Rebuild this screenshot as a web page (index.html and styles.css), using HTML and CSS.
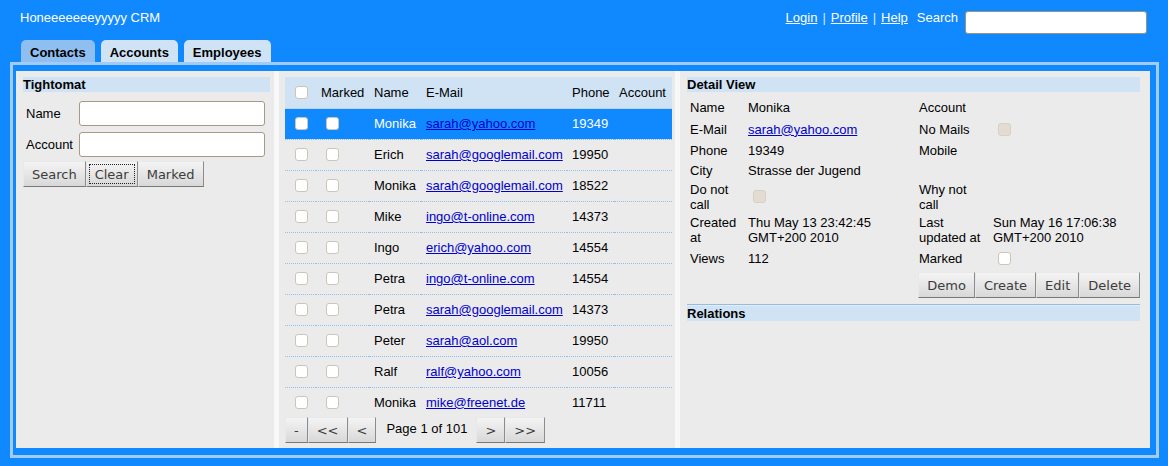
FILE: index.html
```html
<!DOCTYPE html>
<html>
<head>
<meta charset="utf-8">
<title>Honeeeeeeeyyyyy CRM</title>
<link rel="stylesheet" href="styles.css">
</head>
<body>
<div class="topbar">
  <div class="brand">Honeeeeeeeyyyyy CRM</div>
  <div class="toplinks">
    <a href="#">Login</a><span class="sep">|</span><a href="#">Profile</a><span class="sep">|</span><a href="#">Help</a>
    <span class="search-label">Search</span>
    <input class="search-input" type="text">
  </div>
</div>
<div class="tabs">
  <div class="tab active">Contacts</div>
  <div class="tab">Accounts</div>
  <div class="tab">Employees</div>
</div>
<div class="main">
  <div class="panes">
    <div class="pane left">
      <div class="caption">Tightomat</div>
      <div class="form">
        <label>Name</label><input type="text" class="field">
        <label>Account</label><input type="text" class="field">
      </div>
      <div class="btnbar">
        <button class="btn">Search</button><button class="btn focused">Clear</button><button class="btn">Marked</button>
      </div>
    </div>
    <div class="splitter"></div>
    <div class="pane middle">
      <table class="grid">
        <colgroup>
          <col class="c1"><col class="c2"><col class="c3"><col class="c4"><col class="c5"><col class="c6">
        </colgroup>
        <thead>
          <tr><th><input type="checkbox" class="cb"></th><th>Marked</th><th>Name</th><th>E-Mail</th><th>Phone</th><th>Account</th></tr>
        </thead>
        <tbody>
          <tr class="sel"><td><input type="checkbox" class="cb"></td><td><input type="checkbox" class="cb"></td><td>Monika</td><td><a href="#">sarah@yahoo.com</a></td><td>19349</td><td></td></tr>
          <tr><td><input type="checkbox" class="cb"></td><td><input type="checkbox" class="cb"></td><td>Erich</td><td><a href="#">sarah@googlemail.com</a></td><td>19950</td><td></td></tr>
          <tr><td><input type="checkbox" class="cb"></td><td><input type="checkbox" class="cb"></td><td>Monika</td><td><a href="#">sarah@googlemail.com</a></td><td>18522</td><td></td></tr>
          <tr><td><input type="checkbox" class="cb"></td><td><input type="checkbox" class="cb"></td><td>Mike</td><td><a href="#">ingo@t-online.com</a></td><td>14373</td><td></td></tr>
          <tr><td><input type="checkbox" class="cb"></td><td><input type="checkbox" class="cb"></td><td>Ingo</td><td><a href="#">erich@yahoo.com</a></td><td>14554</td><td></td></tr>
          <tr><td><input type="checkbox" class="cb"></td><td><input type="checkbox" class="cb"></td><td>Petra</td><td><a href="#">ingo@t-online.com</a></td><td>14554</td><td></td></tr>
          <tr><td><input type="checkbox" class="cb"></td><td><input type="checkbox" class="cb"></td><td>Petra</td><td><a href="#">sarah@googlemail.com</a></td><td>14373</td><td></td></tr>
          <tr><td><input type="checkbox" class="cb"></td><td><input type="checkbox" class="cb"></td><td>Peter</td><td><a href="#">sarah@aol.com</a></td><td>19950</td><td></td></tr>
          <tr><td><input type="checkbox" class="cb"></td><td><input type="checkbox" class="cb"></td><td>Ralf</td><td><a href="#">ralf@yahoo.com</a></td><td>10056</td><td></td></tr>
          <tr><td><input type="checkbox" class="cb"></td><td><input type="checkbox" class="cb"></td><td>Monika</td><td><a href="#">mike@freenet.de</a></td><td>11711</td><td></td></tr>
        </tbody>
      </table>
      <div class="pager">
        <button class="btn">-</button><button class="btn">&lt;&lt;</button><button class="btn">&lt;</button>
        <span class="pageinfo">Page 1 of 101</span>
        <button class="btn">&gt;</button><button class="btn">&gt;&gt;</button>
      </div>
    </div>
    <div class="splitter"></div>
    <div class="pane right">
      <div class="caption">Detail View</div>
      <div class="detail">
        <span>Name</span><span>Monika</span><span>Account</span><span></span>
        <span>E-Mail</span><span><a href="#">sarah@yahoo.com</a></span><span>No Mails</span><span><input type="checkbox" class="cb" disabled></span>
        <span>Phone</span><span>19349</span><span>Mobile</span><span></span>
        <span>City</span><span>Strasse der Jugend</span><span></span><span></span>
        <span>Do not<br>call</span><span><input type="checkbox" class="cb" disabled></span><span>Why not<br>call</span><span></span>
        <span>Created<br>at</span><span>Thu May 13 23:42:45<br>GMT+200 2010</span><span>Last<br>updated at</span><span>Sun May 16 17:06:38<br>GMT+200 2010</span>
        <span>Views</span><span>112</span><span>Marked</span><span><input type="checkbox" class="cb"></span>
      </div>
      <div class="actions">
        <button class="btn">Demo</button><button class="btn">Create</button><button class="btn">Edit</button><button class="btn">Delete</button>
      </div>
      <div class="rule"></div>
      <div class="caption">Relations</div>
    </div>
  </div>
</div>
</body>
</html>
```
FILE: styles.css
```css
* { box-sizing: border-box; }
html, body { margin: 0; padding: 0; }
body {
  width: 1168px;
  height: 466px;
  overflow: hidden;
  background: #1089ff;
  font-family: "Liberation Sans", Arial, sans-serif;
  font-size: 13px;
  line-height: 15px;
  color: #000;
}
a { color: #0000cc; }

.topbar {
  display: flex;
  justify-content: space-between;
  align-items: flex-start;
  height: 40px;
  padding: 0 21px 0 20px;
}
.brand { color: #fff; padding-top: 10px; }
.toplinks { display: flex; align-items: flex-start; color: #fff; }
.toplinks a { color: #fff; padding-top: 10px; }
.sep { padding-top: 10px; margin: 0 5px; color: #d6e8ff; }
.search-label { padding-top: 10px; margin-left: 9px; margin-right: 7px; }
.search-input {
  margin: 11px 0 0 0;
  width: 182px;
  height: 23px;
  border: 1px solid #9c9182;
  border-radius: 3px;
  background: #fff;
}

.tabs { display: flex; gap: 6px; height: 22px; padding-left: 21px; }
.tab {
  height: 22px;
  padding: 3px 9px 0 9px;
  line-height: 19px;
  font-weight: bold;
  background: #cfe3f5;
  border-radius: 5px 5px 0 0;
}
.tab.active { background: #8fbef0; }

.main {
  margin-left: 10px;
  width: 1149px;
  height: 396px;
  border: 3px solid #a2cbf5;
  padding: 6px 6px 7px 3px;
}
.panes { display: flex; height: 377px; }
.pane { background: #ebebeb; height: 100%; }
.splitter { width: 5px; background: #f8f8f8; }
.left { width: 258px; padding: 6px 4px 0 7px; }
.middle { width: 396px; padding: 6px 3px 0 6px; }
.right { width: 470px; padding: 6px 10px 0 7px; }

.caption {
  height: 15px;
  line-height: 15px;
  background: #cfe3f5;
  font-weight: bold;
}

.form {
  display: grid;
  grid-template-columns: 56px 186px;
  grid-auto-rows: 25px;
  row-gap: 6px;
  margin-top: 9px;
  align-items: center;
}
.form label { padding-left: 3px; }
.field {
  width: 186px;
  height: 25px;
  margin: 0;
  border: 1px solid #a69a86;
  border-radius: 3px;
  background: #fff;
}

.btnbar { display: flex; margin-top: 4px; }
.btn {
  height: 26px;
  padding: 0 8px;
  margin: 0;
  font-family: "DejaVu Sans", sans-serif;
  font-size: 13px;
  color: #3c3c3c;
  background: linear-gradient(#f4f4f4, #d8d8d8);
  border: 1px solid;
  border-color: #e8e8e8 #8c8c8c #777 #e8e8e8;
  border-radius: 0;
}
.btn.focused { outline: 1px dotted #222; outline-offset: -4px; }

.grid { border-collapse: collapse; table-layout: fixed; width: 387px; }
.c1 { width: 31px; }
.c2 { width: 53px; }
.c3 { width: 52px; }
.c4 { width: 146px; }
.c5 { width: 47px; }
.c6 { width: 58px; }
.grid th {
  font-weight: normal;
  text-align: left;
  height: 31px;
  padding: 0 5px;
  background: #cfe3f5;
  border-bottom: 1px solid #b7d4f1;
  white-space: nowrap;
}
.grid td {
  height: 31px;
  padding: 0 5px;
  border-bottom: 1px dotted #8fc1f0;
  white-space: nowrap;
  vertical-align: middle;
}
.grid tbody tr:last-child td { border-bottom: none; height: 30px; }
.grid tr.sel td { background: #1089ff; color: #fff; }

.cb {
  -webkit-appearance: none;
  appearance: none;
  display: block;
  width: 13px;
  height: 13px;
  margin: 0 0 0 5px;
  border: 1px solid #cdc5b7;
  border-radius: 3px;
  background: #fff;
}
.cb:disabled { background: #e2dcd3; border-color: #d8d0c4; }

.pager { display: flex; align-items: center; }
.pageinfo { margin: 0 9px 4px 10px; }

.detail {
  display: grid;
  grid-template-columns: 58px 171px 74px 1fr;
  grid-template-rows: 22px 22px 20px 20px 33px 33px 25px;
  margin-top: 4px;
  padding-left: 3px;
  align-items: center;
}
.actions { display: flex; justify-content: flex-end; margin-top: 1px; }
.rule { margin-top: 6px; height: 1px; background: #8cbff0; margin-bottom: 1px; }
```
